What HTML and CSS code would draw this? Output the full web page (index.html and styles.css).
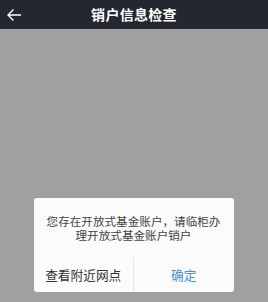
FILE: index.html
```html
<!DOCTYPE html>
<html lang="zh">
<head>
<meta charset="utf-8">
<link rel="stylesheet" href="styles.css">
</head>
<body>
<header class="bar">
  <svg class="back" width="16" height="14" viewBox="0 0 16 14"><path d="M15 7H2M7.5 1.5L2 7l5.5 5.5" fill="none" stroke="#fff" stroke-width="1.4"/></svg>
  <h1 class="title">销户信息检查</h1>
</header>
<main class="stage">
  <div class="dialog">
    <p class="msg"><span class="line">您存在开放式基金账户，请临柜办</span><span class="line">理开放式基金账户销户</span></p>
    <div class="actions">
      <button class="btn">查看附近网点</button>
      <button class="btn primary">确定</button>
    </div>
  </div>
</main>
</body>
</html>
```
FILE: styles.css
```css
html, body {
  margin: 0;
  height: 100%;
  font-family: "Noto Sans CJK SC", "Noto Sans", sans-serif;
}
body {
  display: flex;
  flex-direction: column;
  background: #a0a0a0;
}
.bar {
  position: relative;
  height: 29px;
  background: #23272f;
  display: flex;
  align-items: center;
  justify-content: center;
}
.back {
  position: absolute;
  left: 6px;
  top: 8px;
}
.title {
  margin: 0;
  color: #fff;
  font-size: 14px;
  font-weight: 700;
  line-height: 29px;
  letter-spacing: 0.3px;
}
.stage {
  flex: 1;
  display: flex;
  flex-direction: column;
  justify-content: flex-end;
  align-items: center;
  padding-bottom: 10px;
}
.dialog {
  width: 200px;
  background: #fbfbfb;
  border-radius: 3px;
  margin-right: 1px;
}
.msg {
  margin: 0;
  padding: 17px 8px 15px;
  text-align: center;
  font-size: 11.6px;
  color: #444;
  display: flex;
  flex-direction: column;
  gap: 1px;
}
.line {
  line-height: 13px;
  height: 13px;
  overflow: visible;
}
.actions {
  display: flex;
  height: 35px;
}
.btn {
  flex: 1;
  border: 0;
  background: none;
  font-family: inherit;
  font-size: 12.7px;
  color: #333;
  padding: 0;
}
.btn + .btn {
  border-left: 1px solid #e6e6e6;
}
.primary {
  color: #4a8fc9;
}
```
